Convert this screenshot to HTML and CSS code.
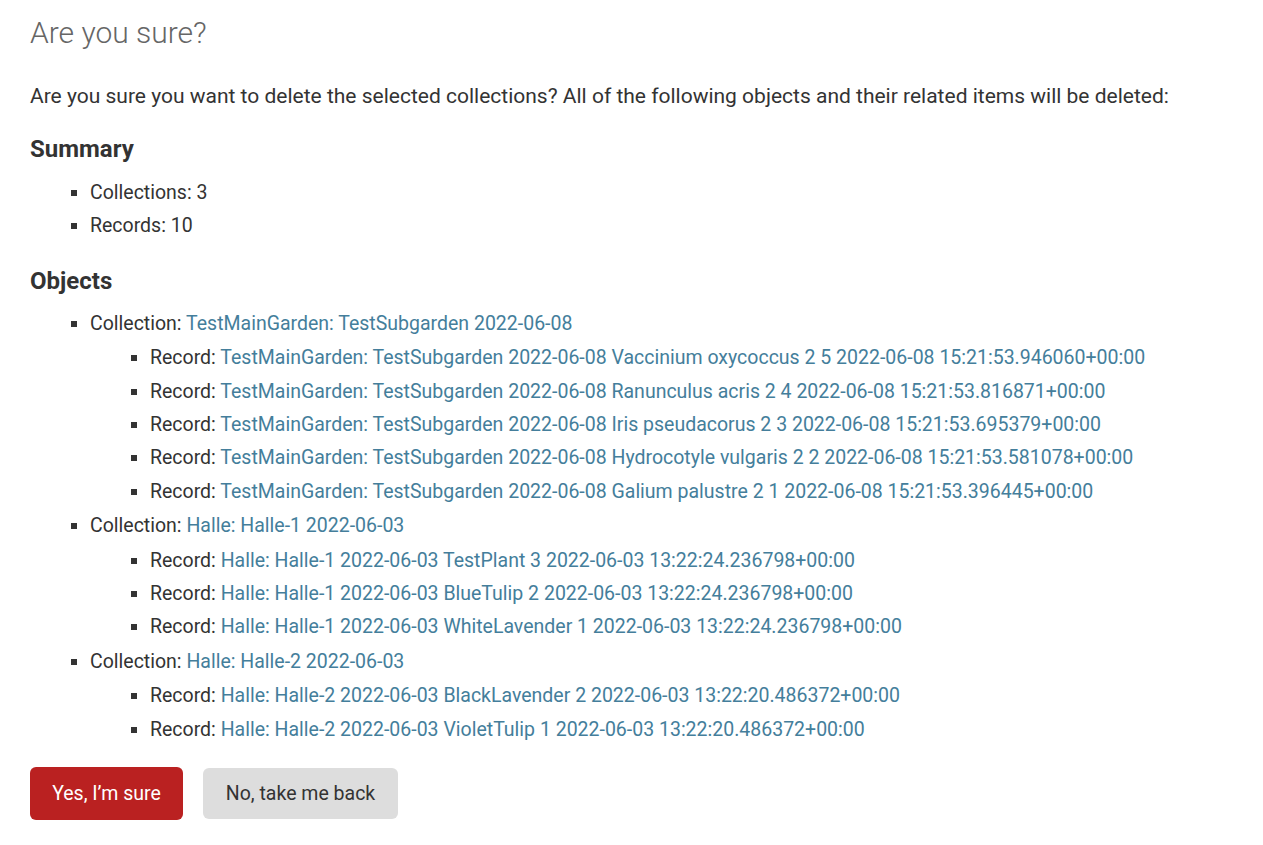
FILE: index.html
```html
<!DOCTYPE html>
<html lang="en">
<head>
<meta charset="utf-8">
<title>Are you sure?</title>
<link rel="stylesheet" href="styles.css">
</head>
<body>
<div class="content">
  <h1 class="title">Are you sure?</h1>
  <p class="intro">Are you sure you want to delete the selected collections? All of the following objects and their related items will be deleted:</p>
  <h2 class="section">Summary</h2>
  <ul class="list">
    <li>Collections: 3</li>
    <li>Records: 10</li>
  </ul>
  <h2 class="section">Objects</h2>
  <ul class="list list-objects">
    <li>Collection: <a href="#">TestMainGarden: TestSubgarden 2022-06-08</a>
      <ul class="sublist">
        <li>Record: <a href="#">TestMainGarden: TestSubgarden 2022-06-08 Vaccinium oxycoccus 2 5 2022-06-08 15:21:53.946060+00:00</a></li>
        <li>Record: <a href="#">TestMainGarden: TestSubgarden 2022-06-08 Ranunculus acris 2 4 2022-06-08 15:21:53.816871+00:00</a></li>
        <li>Record: <a href="#">TestMainGarden: TestSubgarden 2022-06-08 Iris pseudacorus 2 3 2022-06-08 15:21:53.695379+00:00</a></li>
        <li>Record: <a href="#">TestMainGarden: TestSubgarden 2022-06-08 Hydrocotyle vulgaris 2 2 2022-06-08 15:21:53.581078+00:00</a></li>
        <li>Record: <a href="#">TestMainGarden: TestSubgarden 2022-06-08 Galium palustre 2 1 2022-06-08 15:21:53.396445+00:00</a></li>
      </ul>
    </li>
    <li>Collection: <a href="#">Halle: Halle-1 2022-06-03</a>
      <ul class="sublist">
        <li>Record: <a href="#">Halle: Halle-1 2022-06-03 TestPlant 3 2022-06-03 13:22:24.236798+00:00</a></li>
        <li>Record: <a href="#">Halle: Halle-1 2022-06-03 BlueTulip 2 2022-06-03 13:22:24.236798+00:00</a></li>
        <li>Record: <a href="#">Halle: Halle-1 2022-06-03 WhiteLavender 1 2022-06-03 13:22:24.236798+00:00</a></li>
      </ul>
    </li>
    <li>Collection: <a href="#">Halle: Halle-2 2022-06-03</a>
      <ul class="sublist">
        <li>Record: <a href="#">Halle: Halle-2 2022-06-03 BlackLavender 2 2022-06-03 13:22:20.486372+00:00</a></li>
        <li>Record: <a href="#">Halle: Halle-2 2022-06-03 VioletTulip 1 2022-06-03 13:22:20.486372+00:00</a></li>
      </ul>
    </li>
  </ul>
  <form class="actions">
    <button type="button" class="btn btn-danger">Yes, I’m sure</button>
    <a href="#" class="btn btn-cancel">No, take me back</a>
  </form>
</div>
</body>
</html>
```

FILE: styles.css
```css
html, body {
  margin: 0;
  padding: 0;
  background: #fff;
}
body {
  font-family: Roboto, "Liberation Sans", sans-serif;
  color: #333;
}
.content {
  padding: 15px 30px 30px;
}
.title {
  margin: 0 0 30px;
  font-size: 30px;
  line-height: 36px;
  font-weight: 300;
  color: #666;
}
.intro {
  margin: 0 0 23px;
  font-size: 21px;
  line-height: 30px;
}
.section {
  margin: 0 0 12px;
  font-size: 24px;
  line-height: 30px;
  font-weight: 700;
  color: #333;
}
.list {
  margin: 0 0 23px 30px;
  padding: 0 0 0 30px;
}
.list-objects {
  margin-bottom: 19.5px;
}
.list li {
  list-style-type: square;
  padding: 1.5px 0;
  font-size: 19.5px;
  line-height: 30.3px;
}
.list li::marker {
  color: #333;
}
.sublist {
  margin: 2.5px 0 0 30px;
  padding: 0 0 0 30px;
}
a {
  color: #447e9b;
  text-decoration: none;
}
.actions {
  display: flex;
  align-items: center;
  gap: 20px;
  margin-top: 0;
}
.btn {
  box-sizing: border-box;
  display: inline-flex;
  align-items: center;
  justify-content: center;
  font-family: Roboto, "Liberation Sans", sans-serif;
  font-size: 19.5px;
  border: 0;
  border-radius: 6px;
  cursor: pointer;
}
.btn-danger {
  background: #ba2121;
  color: #fff;
  height: 53px;
  width: 153px;
  padding: 0;
}
.btn-cancel {
  background: #ddd;
  color: #333;
  height: 51px;
  width: 195px;
  padding: 0;
}
```
